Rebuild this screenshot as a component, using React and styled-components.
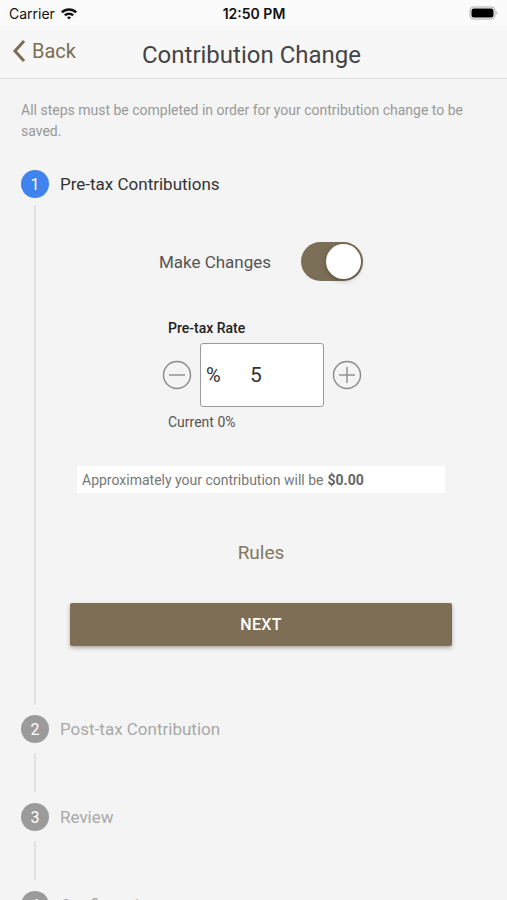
import React from "react";
import styled, { createGlobalStyle } from "styled-components";

const GlobalStyle = createGlobalStyle`
  html, body {
    margin: 0;
    padding: 0;
    background: #f4f4f4;
  }
  body {
    font-family: Roboto, "Liberation Sans", sans-serif;
  }
  * { box-sizing: border-box; }
`;

const Screen = styled.div`
  width: 507px;
  height: 900px;
  overflow: hidden;
  background: #f4f4f4;
  display: flex;
  flex-direction: column;
`;

const StatusBar = styled.div`
  flex-shrink: 0;
  height: 26px;
  background: #fbfbfb;
  display: grid;
  grid-template-columns: 1fr auto 1fr;
  align-items: center;
  padding: 0 8px 0 9px;
  font-family: Inter, "Liberation Sans", sans-serif;
  color: #111;
`;

const Carrier = styled.div`
  display: flex;
  align-items: center;
  gap: 5px;
  font-size: 14px;
`;

const Clock = styled.div`
  font-size: 14px;
  font-weight: 600;
`;

const Battery = styled.div`
  justify-self: end;
  display: flex;
  align-items: center;
`;

const NavBar = styled.div`
  flex-shrink: 0;
  height: 53px;
  background: #f7f7f7;
  border-bottom: 1px solid #dcdcdc;
  display: grid;
  grid-template-columns: 1fr auto 1fr;
  align-items: center;
  padding: 0 12px;
`;

const BackButton = styled.div`
  display: flex;
  align-items: center;
  gap: 6px;
  color: #7b6e56;
  font-size: 20px;
  margin-top: -2px;
`;

const Title = styled.div`
  font-size: 24px;
  color: #444;
  margin: 6px 0 0 -4px;
`;

const Content = styled.div`
  flex-shrink: 0;
  padding: 21px 21px 0 21px;
`;

const Intro = styled.p`
  margin: 0 0 28px;
  font-size: 14px;
  line-height: 21px;
  color: #999;
`;

const StepHead = styled.div`
  display: flex;
  align-items: center;
  gap: 11px;
  height: 28px;
`;

const StepDot = styled.div`
  width: 28px;
  height: 28px;
  border-radius: 50%;
  background: ${(p) => (p.$active ? "#3f83ee" : "#9b9b9b")};
  color: #fff;
  display: flex;
  align-items: center;
  justify-content: center;
  font-size: 16px;
`;

const StepLabel = styled.div`
  font-size: 17px;
  color: ${(p) => (p.$active ? "#333" : "#a8a8a8")};
`;

const StepBody = styled.div`
  margin: ${(p) => (p.$open ? "7px 0 10px 13px" : "10px 0 11px 13px")};
  border-left: 2px solid #e2e2e2;
  min-height: ${(p) => p.$h}px;
  display: flex;
  flex-direction: column;
  align-items: center;
`;

const SwitchRow = styled.div`
  margin-top: 37px;
  display: flex;
  align-items: center;
  gap: 30px;
`;

const SwitchLabel = styled.span`
  font-size: 17px;
  color: #555;
`;

const Track = styled.div`
  width: 62px;
  height: 39px;
  border-radius: 20px;
  background: #7b6e56;
  display: flex;
  align-items: center;
  justify-content: flex-end;
  padding: 2px;
`;

const Knob = styled.div`
  width: 35px;
  height: 35px;
  border-radius: 50%;
  background: #fff;
  box-shadow: 0 2px 5px rgba(0, 0, 0, 0.25);
`;

const RateBlock = styled.div`
  margin-top: 39px;
  margin-left: 2px;
  display: flex;
  flex-direction: column;
`;

const RateLabel = styled.div`
  padding-left: 6px;
  font-size: 14px;
  font-weight: 500;
  color: #222;
  line-height: 17px;
`;

const Stepper = styled.div`
  margin-top: 6px;
  display: flex;
  align-items: center;
  gap: 8px;
`;

const RateBox = styled.div`
  width: 124px;
  height: 64px;
  background: #fff;
  border: 1px solid #9a9a9a;
  border-radius: 3px;
  display: flex;
  align-items: center;
  padding-left: 5px;
  color: #333;
`;

const Percent = styled.span`
  font-size: 20px;
  width: 44px;
`;

const RateValue = styled.span`
  font-size: 21px;
`;

const Current = styled.div`
  margin-top: 7px;
  padding-left: 6px;
  font-size: 14px;
  color: #555;
  line-height: 17px;
`;

const Estimate = styled.div`
  margin-top: 35px;
  width: 368px;
  height: 27px;
  background: #fff;
  display: flex;
  align-items: center;
  padding-left: 5px;
  font-size: 14px;
  color: #777;

  b {
    color: #666;
    margin-left: 4px;
  }
`;

const Rules = styled.div`
  margin-top: 48px;
  font-size: 19px;
  color: #847860;
  line-height: 23px;
`;

const NextButton = styled.button`
  margin-top: 39px;
  width: 382px;
  height: 43px;
  border: none;
  border-radius: 2px;
  background: #7d6e55;
  color: #fff;
  font-family: Roboto, "Liberation Sans", sans-serif;
  font-size: 16px;
  font-weight: 500;
  letter-spacing: 0.3px;
  box-shadow: 0 2px 4px rgba(0, 0, 0, 0.3);
`;

const RoundIcon = ({ plus }) => (
  <svg width="30" height="30" viewBox="0 0 30 30">
    <circle cx="15" cy="15" r="13.5" fill="none" stroke="#8a8a8a" strokeWidth="1.4" />
    <line x1="7" y1="15" x2="23" y2="15" stroke="#8a8a8a" strokeWidth="1.4" />
    {plus && <line x1="15" y1="7" x2="15" y2="23" stroke="#8a8a8a" strokeWidth="1.4" />}
  </svg>
);

const steps = [
  { n: 2, label: "Post-tax Contribution" },
  { n: 3, label: "Review" },
  { n: 4, label: "Confirmation" },
];

export default function App() {
  return (
    <Screen>
      <GlobalStyle />
      <StatusBar>
        <Carrier>
          Carrier
          <svg width="18" height="13" viewBox="0 0 18 13">
            <path d="M1 4.6 A11.5 11.5 0 0 1 17 4.6 L15.3 6.3 A9 9 0 0 0 2.7 6.3 Z" fill="#111" />
            <path d="M4 7.6 A7 7 0 0 1 14 7.6 L12.3 9.3 A4.6 4.6 0 0 0 5.7 9.3 Z" fill="#111" />
            <path d="M7 10.6 A2.8 2.8 0 0 1 11 10.6 L9 12.6 Z" fill="#111" />
          </svg>
        </Carrier>
        <Clock>12:50 PM</Clock>
        <Battery>
          <svg width="30" height="14" viewBox="0 0 30 14">
            <rect x="1" y="1" width="25" height="12" rx="3.5" fill="none" stroke="#aaa" strokeWidth="1" />
            <rect x="2.5" y="2.5" width="22" height="9" rx="2.2" fill="#000" />
            <path d="M27.5 5 Q29.5 7 27.5 9 Z" fill="#aaa" />
          </svg>
        </Battery>
      </StatusBar>
      <NavBar>
        <BackButton>
          <svg width="14" height="24" viewBox="0 0 14 24">
            <path d="M12 2 L3 12 L12 22" fill="none" stroke="#7b6e56" strokeWidth="3" />
          </svg>
          Back
        </BackButton>
        <Title>Contribution Change</Title>
        <span />
      </NavBar>
      <Content>
        <Intro>All steps must be completed in order for your contribution change to be saved.</Intro>

        <StepHead>
          <StepDot $active>1</StepDot>
          <StepLabel $active>Pre-tax Contributions</StepLabel>
        </StepHead>
        <StepBody $open $h={500}>
          <SwitchRow>
            <SwitchLabel>Make Changes</SwitchLabel>
            <Track>
              <Knob />
            </Track>
          </SwitchRow>
          <RateBlock>
            <RateLabel>Pre-tax Rate</RateLabel>
            <Stepper>
              <RoundIcon />
              <RateBox>
                <Percent>%</Percent>
                <RateValue>5</RateValue>
              </RateBox>
              <RoundIcon plus />
            </Stepper>
            <Current>Current 0%</Current>
          </RateBlock>
          <Estimate>
            Approximately your contribution will be <b>$0.00</b>
          </Estimate>
          <Rules>Rules</Rules>
          <NextButton>NEXT</NextButton>
        </StepBody>

        {steps.map((s) => (
          <React.Fragment key={s.n}>
            <StepHead>
              <StepDot>{s.n}</StepDot>
              <StepLabel>{s.label}</StepLabel>
            </StepHead>
            <StepBody $h={39} />
          </React.Fragment>
        ))}
      </Content>
    </Screen>
  );
}
